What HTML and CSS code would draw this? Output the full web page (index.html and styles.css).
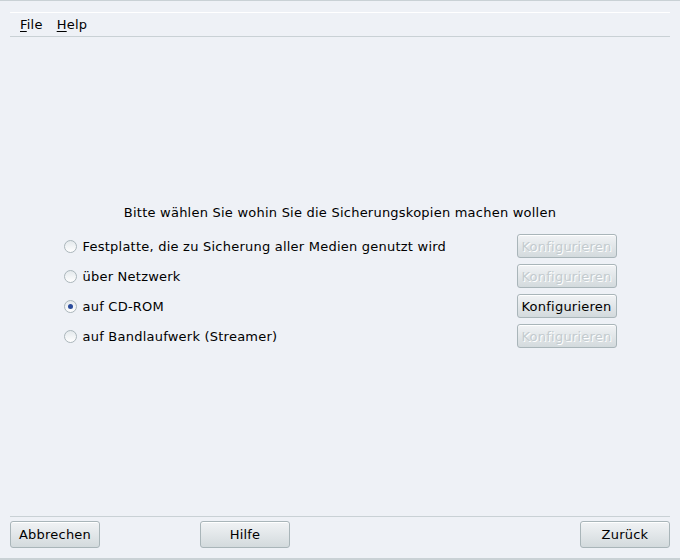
FILE: index.html
```html
<!DOCTYPE html>
<html lang="de">
<head>
  <meta charset="UTF-8">
  <title>Sicherung</title>
  <link rel="stylesheet" href="styles.css">
</head>
<body>
  <div class="menubar">
    <span class="menu"><u>F</u>ile</span>
    <span class="menu"><u>H</u>elp</span>
  </div>

  <div class="main">
    <p class="title">Bitte wählen Sie wohin Sie die Sicherungskopien machen wollen</p>
    <div class="options">
      <div class="row">
        <label class="option"><span class="radio"></span>Festplatte, die zu Sicherung aller Medien genutzt wird</label>
        <button class="btn small" disabled>Konfigurieren</button>
      </div>
      <div class="row">
        <label class="option"><span class="radio"></span>über Netzwerk</label>
        <button class="btn small" disabled>Konfigurieren</button>
      </div>
      <div class="row">
        <label class="option"><span class="radio checked"></span>auf CD-ROM</label>
        <button class="btn small">Konfigurieren</button>
      </div>
      <div class="row">
        <label class="option"><span class="radio"></span>auf Bandlaufwerk (Streamer)</label>
        <button class="btn small" disabled>Konfigurieren</button>
      </div>
    </div>
  </div>

  <div class="footer">
    <button class="btn big">Abbrechen</button>
    <button class="btn big">Hilfe</button>
    <span class="spacer"></span>
    <button class="btn big">Zurück</button>
  </div>
</body>
</html>
```

FILE: styles.css
```css
html, body {
  margin: 0;
  height: 560px;
}
body {
  box-sizing: border-box;
  background-color: #eef1f6;
  border-top: 1px solid #c9d1d5;
  border-bottom: 2px solid #c9d1d5;
  font-family: "DejaVu Sans", sans-serif;
  font-size: 13px;
  letter-spacing: 0.23px;
  color: #000;
  display: flex;
  flex-direction: column;
}

.menubar {
  margin: 11px 10px 0;
  height: 23px;
  border-top: 1px solid #ffffff;
  border-bottom: 1px solid #c9d1d5;
  padding-left: 10px;
  display: flex;
  align-items: center;
  gap: 14px;
}
.menu u {
  text-decoration-thickness: 1px;
  text-underline-offset: 2px;
}

.main {
  flex: 1;
  display: flex;
  flex-direction: column;
  align-items: center;
  justify-content: center;
}
.title {
  margin: 0 0 14px;
}
.options {
  width: 553px;
  display: flex;
  flex-direction: column;
  gap: 6px;
}
.row {
  display: flex;
  justify-content: space-between;
  align-items: center;
  height: 24px;
}
.option {
  display: flex;
  align-items: center;
  gap: 6px;
}
.radio {
  width: 11px;
  height: 11px;
  border: 1px solid #aab6bb;
  border-radius: 50%;
  background: linear-gradient(#e4e9ec, #ffffff);
  position: relative;
}
.radio.checked::after {
  content: "";
  position: absolute;
  left: 3px;
  top: 3px;
  width: 5px;
  height: 5px;
  border-radius: 50%;
  background-color: #2a4b9b;
}

.btn {
  font-family: "DejaVu Sans", sans-serif;
  font-size: 13px;
  letter-spacing: 0.23px;
  color: #000;
  background: linear-gradient(#f1f3f5, #d3dadd);
  border: 1px solid #a9b5b9;
  border-radius: 3px;
  padding: 0;
  box-shadow: inset 0 1px 0 #ffffff;
}
.btn:disabled {
  color: #c3cbcf;
  text-shadow: 1px 1px 0 #ffffff;
}
.btn.small {
  width: 100px;
  height: 24px;
}
.btn.big {
  width: 90px;
  height: 27px;
}

.footer {
  margin: 0 10px;
  border-top: 1px solid #c9d1d5;
  padding: 4px 0 10px;
  display: flex;
  gap: 100px;
}
.spacer {
  flex: 1;
}
```
